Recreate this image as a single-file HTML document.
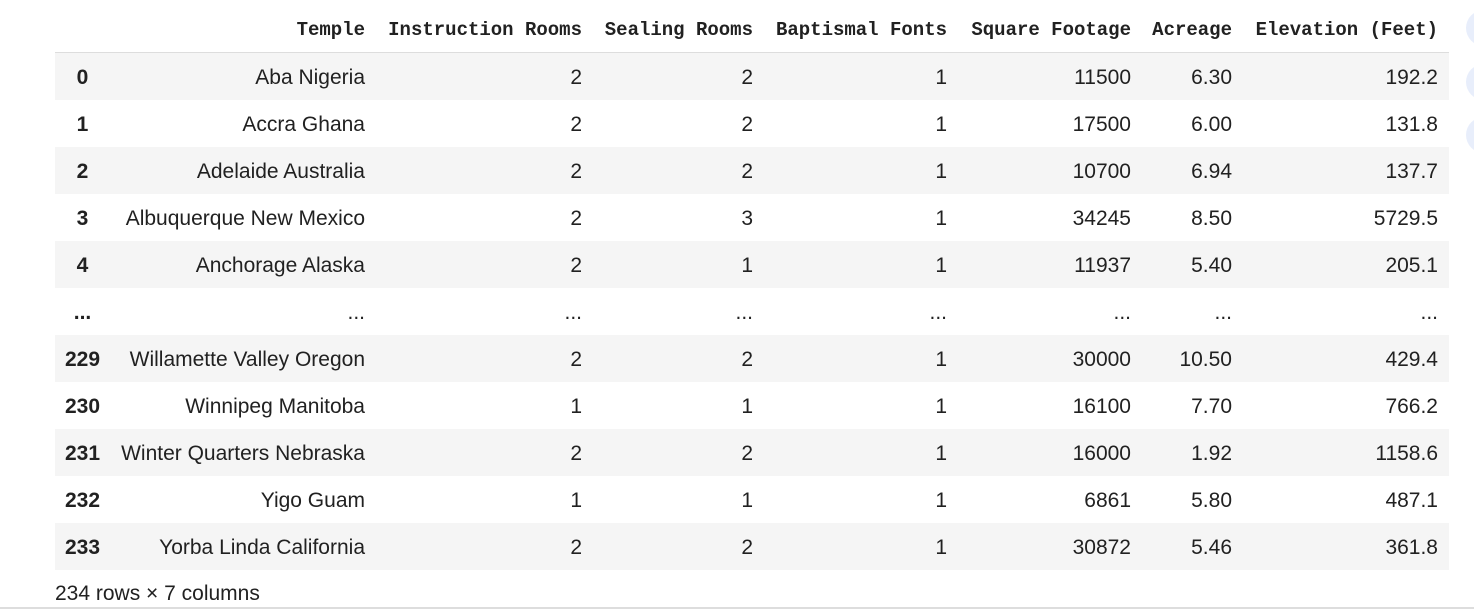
<!DOCTYPE html>
<html><head><meta charset="utf-8"><style>
body{margin:0;width:1474px;height:612px;background:#fff;overflow:hidden;position:relative;font-family:"Liberation Sans",Arial,sans-serif;color:#212121}
.r{position:absolute;left:55px;width:1394px;height:47px;display:flex;align-items:center;font-size:21px}
.r div{padding-top:3px}
.g{background:#f5f5f5}
.r div{box-sizing:border-box;text-align:right;padding-right:10px;white-space:nowrap}
.r div:first-child{text-align:center;padding-right:0;font-weight:bold}
.c0{width:55px}.c1{width:265px}.c2{width:217px}.c3{width:171px}.c4{width:194px}.c5{width:184px}.c6{width:101px}.c7{width:207px;padding-right:11px!important}
.h{top:4px;height:48px;font-family:"Liberation Mono","DejaVu Sans Mono",monospace;font-weight:bold;font-size:19px;border-bottom:1px solid #ddd}
.h div{padding-top:4px}
.circ{position:absolute;left:1466px;width:36px;height:36px;border-radius:50%;background:#e8eefb}
</style></head><body>
<div class="r h"><div class="c0"></div><div class="c1">Temple</div><div class="c2">Instruction Rooms</div><div class="c3">Sealing Rooms</div><div class="c4">Baptismal Fonts</div><div class="c5">Square Footage</div><div class="c6">Acreage</div><div class="c7">Elevation (Feet)</div></div>
<div class="r g" style="top:53px"><div class="c0">0</div><div class="c1">Aba Nigeria</div><div class="c2">2</div><div class="c3">2</div><div class="c4">1</div><div class="c5">11500</div><div class="c6">6.30</div><div class="c7">192.2</div></div>
<div class="r" style="top:100px"><div class="c0">1</div><div class="c1">Accra Ghana</div><div class="c2">2</div><div class="c3">2</div><div class="c4">1</div><div class="c5">17500</div><div class="c6">6.00</div><div class="c7">131.8</div></div>
<div class="r g" style="top:147px"><div class="c0">2</div><div class="c1">Adelaide Australia</div><div class="c2">2</div><div class="c3">2</div><div class="c4">1</div><div class="c5">10700</div><div class="c6">6.94</div><div class="c7">137.7</div></div>
<div class="r" style="top:194px"><div class="c0">3</div><div class="c1">Albuquerque New Mexico</div><div class="c2">2</div><div class="c3">3</div><div class="c4">1</div><div class="c5">34245</div><div class="c6">8.50</div><div class="c7">5729.5</div></div>
<div class="r g" style="top:241px"><div class="c0">4</div><div class="c1">Anchorage Alaska</div><div class="c2">2</div><div class="c3">1</div><div class="c4">1</div><div class="c5">11937</div><div class="c6">5.40</div><div class="c7">205.1</div></div>
<div class="r" style="top:288px"><div class="c0">...</div><div class="c1">...</div><div class="c2">...</div><div class="c3">...</div><div class="c4">...</div><div class="c5">...</div><div class="c6">...</div><div class="c7">...</div></div>
<div class="r g" style="top:335px"><div class="c0">229</div><div class="c1">Willamette Valley Oregon</div><div class="c2">2</div><div class="c3">2</div><div class="c4">1</div><div class="c5">30000</div><div class="c6">10.50</div><div class="c7">429.4</div></div>
<div class="r" style="top:382px"><div class="c0">230</div><div class="c1">Winnipeg Manitoba</div><div class="c2">1</div><div class="c3">1</div><div class="c4">1</div><div class="c5">16100</div><div class="c6">7.70</div><div class="c7">766.2</div></div>
<div class="r g" style="top:429px"><div class="c0">231</div><div class="c1">Winter Quarters Nebraska</div><div class="c2">2</div><div class="c3">2</div><div class="c4">1</div><div class="c5">16000</div><div class="c6">1.92</div><div class="c7">1158.6</div></div>
<div class="r" style="top:476px"><div class="c0">232</div><div class="c1">Yigo Guam</div><div class="c2">1</div><div class="c3">1</div><div class="c4">1</div><div class="c5">6861</div><div class="c6">5.80</div><div class="c7">487.1</div></div>
<div class="r g" style="top:523px"><div class="c0">233</div><div class="c1">Yorba Linda California</div><div class="c2">2</div><div class="c3">2</div><div class="c4">1</div><div class="c5">30872</div><div class="c6">5.46</div><div class="c7">361.8</div></div>
<div style="position:absolute;left:55px;top:582px;font-size:21px">234 rows × 7 columns</div>
<div style="position:absolute;left:0;top:607px;width:1474px;height:2px;background:#ddd"></div>
<div class="circ" style="top:10px"></div><div class="circ" style="top:64px"></div><div class="circ" style="top:117px"></div>
</body></html>
